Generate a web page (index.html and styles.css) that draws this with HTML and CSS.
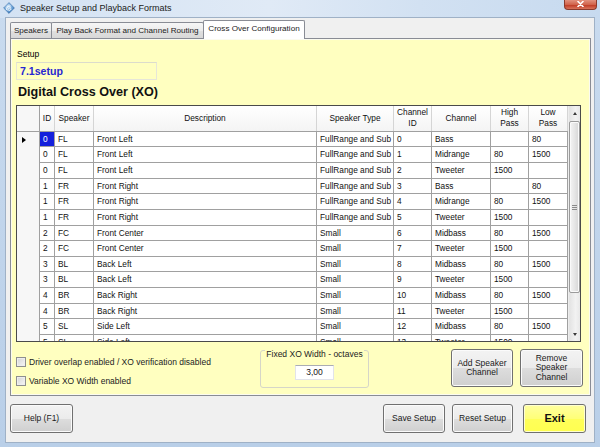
FILE: index.html
```html
<!DOCTYPE html>
<html>
<head>
<meta charset="utf-8">
<link rel="stylesheet" href="styles.css">
</head>
<body>
<div class="window">
  <div class="titlebar">
    <svg class="app-icon" viewBox="0 0 12 12" width="12" height="12">
      <defs>
        <radialGradient id="ig" cx="0.4" cy="0.35" r="0.7">
          <stop offset="0" stop-color="#cfe6fa"/>
          <stop offset="0.6" stop-color="#6aa3d8"/>
          <stop offset="1" stop-color="#2d64a8"/>
        </radialGradient>
      </defs>
      <path d="M6 0.6 L11.4 6 L6 11.4 L0.6 6 Z" fill="url(#ig)" stroke="#3a6ea8" stroke-width="0.6" stroke-linejoin="round"/>
      <path d="M3.6 7.6 C3.2 5.4 5 3.6 7.2 4 M5 8.4 C4.8 6.8 6 5.6 7.6 5.8 M6.6 8.6 C6.6 7.8 7.2 7.2 8 7.2" fill="none" stroke="#ffffff" stroke-width="0.9" stroke-linecap="round"/>
    </svg>
    <span class="title">Speaker Setup and Playback Formats</span>
    <div class="close">
      <svg viewBox="0 0 7 6" width="7" height="6"><path d="M1 0.5 L6 5.5 M6 0.5 L1 5.5" stroke="#ffffff" stroke-width="1.6" stroke-linecap="round"/></svg>
    </div>
  </div>
  <div class="client">
    <div class="tabs">
      <div class="tab tab-speakers">Speakers</div>
      <div class="tab tab-playback">Play Back Format and Channel Routing</div>
      <div class="tab tab-xo active">Cross Over Configuration</div>
    </div>
    <div class="tabpage">
      <div class="setup-label">Setup</div>
      <div class="setup-box">7.1setup</div>
      <div class="heading">Digital Cross Over (XO)</div>
      <div class="grid">
        <div class="gtable">
          <div class="cols ghead">
            <div class="hc corner"></div>
            <div class="hc">ID</div>
            <div class="hc">Speaker</div>
            <div class="hc">Description</div>
            <div class="hc">Speaker Type</div>
            <div class="hc">Channel<br>ID</div>
            <div class="hc">Channel</div>
            <div class="hc">High<br>Pass</div>
            <div class="hc">Low<br>Pass</div>
          </div>
          <div class="gbody">
            <div class="cols row"><div class="rh"><span class="cur"></span></div><div class="c sel">0</div><div class="c">FL</div><div class="c">Front Left</div><div class="c">FullRange and Sub</div><div class="c">0</div><div class="c">Bass</div><div class="c"></div><div class="c">80</div></div>
            <div class="cols row"><div class="rh"></div><div class="c">0</div><div class="c">FL</div><div class="c">Front Left</div><div class="c">FullRange and Sub</div><div class="c">1</div><div class="c">Midrange</div><div class="c">80</div><div class="c">1500</div></div>
            <div class="cols row"><div class="rh"></div><div class="c">0</div><div class="c">FL</div><div class="c">Front Left</div><div class="c">FullRange and Sub</div><div class="c">2</div><div class="c">Tweeter</div><div class="c">1500</div><div class="c"></div></div>
            <div class="cols row"><div class="rh"></div><div class="c">1</div><div class="c">FR</div><div class="c">Front Right</div><div class="c">FullRange and Sub</div><div class="c">3</div><div class="c">Bass</div><div class="c"></div><div class="c">80</div></div>
            <div class="cols row"><div class="rh"></div><div class="c">1</div><div class="c">FR</div><div class="c">Front Right</div><div class="c">FullRange and Sub</div><div class="c">4</div><div class="c">Midrange</div><div class="c">80</div><div class="c">1500</div></div>
            <div class="cols row"><div class="rh"></div><div class="c">1</div><div class="c">FR</div><div class="c">Front Right</div><div class="c">FullRange and Sub</div><div class="c">5</div><div class="c">Tweeter</div><div class="c">1500</div><div class="c"></div></div>
            <div class="cols row"><div class="rh"></div><div class="c">2</div><div class="c">FC</div><div class="c">Front Center</div><div class="c">Small</div><div class="c">6</div><div class="c">Midbass</div><div class="c">80</div><div class="c">1500</div></div>
            <div class="cols row"><div class="rh"></div><div class="c">2</div><div class="c">FC</div><div class="c">Front Center</div><div class="c">Small</div><div class="c">7</div><div class="c">Tweeter</div><div class="c">1500</div><div class="c"></div></div>
            <div class="cols row"><div class="rh"></div><div class="c">3</div><div class="c">BL</div><div class="c">Back Left</div><div class="c">Small</div><div class="c">8</div><div class="c">Midbass</div><div class="c">80</div><div class="c">1500</div></div>
            <div class="cols row"><div class="rh"></div><div class="c">3</div><div class="c">BL</div><div class="c">Back Left</div><div class="c">Small</div><div class="c">9</div><div class="c">Tweeter</div><div class="c">1500</div><div class="c"></div></div>
            <div class="cols row"><div class="rh"></div><div class="c">4</div><div class="c">BR</div><div class="c">Back Right</div><div class="c">Small</div><div class="c">10</div><div class="c">Midbass</div><div class="c">80</div><div class="c">1500</div></div>
            <div class="cols row"><div class="rh"></div><div class="c">4</div><div class="c">BR</div><div class="c">Back Right</div><div class="c">Small</div><div class="c">11</div><div class="c">Tweeter</div><div class="c">1500</div><div class="c"></div></div>
            <div class="cols row"><div class="rh"></div><div class="c">5</div><div class="c">SL</div><div class="c">Side Left</div><div class="c">Small</div><div class="c">12</div><div class="c">Midbass</div><div class="c">80</div><div class="c">1500</div></div>
            <div class="cols row"><div class="rh"></div><div class="c">5</div><div class="c">SL</div><div class="c">Side Left</div><div class="c">Small</div><div class="c">13</div><div class="c">Tweeter</div><div class="c">1500</div><div class="c"></div></div>
          </div>
        </div>
        <div class="vscroll">
          <div class="sarrow"><span class="tri-up"></span></div>
          <div class="thumb"><span class="grip"></span></div>
          <div class="strack"></div>
          <div class="sarrow"><span class="tri-down"></span></div>
        </div>
      </div>
      <div class="lower">
        <div class="checks">
          <div class="check-row"><span class="cb"></span><span>Driver overlap enabled / XO verification disabled</span></div>
          <div class="check-row"><span class="cb"></span><span>Variable XO Width enabled</span></div>
        </div>
        <div class="xo-group">
          <div class="xo-title">Fixed XO Width - octaves</div>
          <div class="xo-input">3,00</div>
        </div>
        <div class="btn btn-add">Add Speaker<br>Channel</div>
        <div class="btn btn-remove">Remove<br>Speaker<br>Channel</div>
      </div>
    </div>
    <div class="footer">
      <div class="btn btn-help">Help (F1)</div>
      <div class="btn btn-save">Save Setup</div>
      <div class="btn btn-reset">Reset Setup</div>
      <div class="btn btn-exit">Exit</div>
    </div>
  </div>
</div>
</body>
</html>
```
FILE: styles.css
```css
* { box-sizing: border-box; }
html, body { margin: 0; padding: 0; }
body {
  width: 600px;
  height: 447px;
  overflow: hidden;
  font-family: "Liberation Sans", Arial, sans-serif;
  font-size: 8.5px;
  color: #000;
}
.window {
  width: 600px;
  height: 447px;
  display: flex;
  flex-direction: column;
  background: linear-gradient(to bottom, #c9dbef, #b9cfe8);
}
.titlebar {
  height: 18px;
  flex: none;
  display: flex;
  align-items: flex-start;
  background: linear-gradient(to right, #d3e2f3 0%, #e0eaf6 45%, #d2e1f2 70%, #c7daef 100%);
}
.app-icon { margin: 2px 0 0 3px; flex: none; }
.title {
  margin-left: 5px;
  font-size: 9px;
  line-height: 16px;
  color: #1a1a1a;
}
.close {
  margin-left: auto;
  margin-right: 3px;
  width: 33px;
  height: 10px;
  border: 1px solid #8a3a2c;
  border-top: none;
  border-radius: 0 0 4px 4px;
  background: linear-gradient(to bottom, #e2917e 0%, #d1644c 50%, #c2402a 60%, #d8735b 100%);
  display: flex;
  align-items: center;
  justify-content: center;
  padding-bottom: 1px;
}
.client {
  flex: 1;
  margin: 0 6px 5px 6px;
  background: #f0f0f0;
  padding: 2px 3px 9px 4px;
  display: flex;
  flex-direction: column;
  box-shadow: 0 0 0 1px #9fb1c6;
}
.tabs {
  height: 18px;
  flex: none;
  display: flex;
  align-items: flex-end;
}
.tab {
  height: 16px;
  border: 1px solid #898c95;
  border-bottom: none;
  border-radius: 2px 2px 0 0;
  background: linear-gradient(to bottom, #f6f6f6 0%, #ececec 50%, #e0e0e0 51%, #d8d8d8 100%);
  display: flex;
  align-items: center;
  justify-content: center;
  font-size: 8.1px;
  white-space: nowrap;
  color: #1a1a1a;
}
.tab-speakers { width: 42px; }
.tab-playback { width: 153px; margin-left: -1px; }
.tab-xo { width: 102px; margin-left: -1px; }
.tab.active {
  height: 19px;
  margin-bottom: -1px;
  background: #ffffff;
  position: relative;
  z-index: 1;
  padding-bottom: 3px;
}
.tabpage {
  height: 358px;
  flex: none;
  border: 1px solid #898c95;
  background: #ffffc0;
  box-shadow: inset 0 0 0 1px #fbfbf0;
  display: flex;
  flex-direction: column;
}
.setup-label {
  margin: 10px 0 0 6px;
  line-height: 10px;
  height: 10px;
}
.setup-box {
  margin: 3px 0 0 5px;
  width: 141px;
  height: 18px;
  border: 1px solid #e6e6d8;
  border-top-color: #dcdccc;
  padding-left: 3px;
  font-weight: bold;
  font-size: 10.6px;
  line-height: 16px;
  color: #2626d2;
}
.heading {
  margin: 5px 0 0 7px;
  font-weight: bold;
  font-size: 12.6px;
  line-height: 15px;
  height: 15px;
  color: #111;
}
.grid {
  margin: 5px 0 0 5px;
  width: 565px;
  height: 237px;
  border: 1px solid #4a4a4a;
  display: flex;
  background: #fff;
  flex: none;
}
.gtable {
  width: 551px;
  display: flex;
  flex-direction: column;
  overflow: hidden;
}
.cols {
  display: grid;
  grid-template-columns: 23px 15px 39px 223px 77px 38px 59px 38px 39px;
}
.ghead {
  height: 25.7px;
  flex: none;
  background: linear-gradient(to bottom, #ffffff, #f4f4f4);
  border-bottom: 1px solid #a0a0a0;
}
.hc {
  border-right: 1px solid #d5d5d5;
  display: flex;
  align-items: center;
  justify-content: center;
  text-align: center;
  font-size: 8.3px;
  line-height: 11px;
  color: #111;
}
.hc.corner { border-right: 1px solid #a0a0a0; background: #f7f7f7; }
.gbody {
  flex: 1;
  overflow: hidden;
}
.row {
  height: 15.65px;
}
.rh {
  background: #f7f7f7;
  border-right: 1px solid #a0a0a0;
  display: flex;
  align-items: center;
  padding-left: 5px;
}
.cur {
  width: 0;
  height: 0;
  border-left: 4px solid #000;
  border-top: 3px solid transparent;
  border-bottom: 3px solid transparent;
}
.c {
  border-right: 1px solid #a0a0a0;
  border-bottom: 1px solid #a0a0a0;
  padding-left: 3px;
  font-size: 8.3px;
  line-height: 14.6px;
  white-space: nowrap;
  overflow: hidden;
  color: #111;
}
.c.sel {
  background: #1420dc;
  color: #fff;
}
.vscroll {
  width: 12px;
  display: flex;
  flex-direction: column;
  background: linear-gradient(to right, #e2e2e2, #f2f2f2 60%, #e8e8e8);
  border-left: 1px solid #ededed;
}
.sarrow {
  height: 14px;
  flex: none;
  display: flex;
  align-items: center;
  justify-content: center;
}
.tri-up {
  width: 0; height: 0;
  border-left: 2.5px solid transparent;
  border-right: 2.5px solid transparent;
  border-bottom: 3px solid #3a3a3a;
}
.tri-down {
  width: 0; height: 0;
  border-left: 2.5px solid transparent;
  border-right: 2.5px solid transparent;
  border-top: 3px solid #3a3a3a;
}
.thumb {
  height: 172px;
  margin: 1px 0 0 0;
  flex: none;
  border: 1px solid #9b9b9b;
  border-radius: 2px;
  background: linear-gradient(to right, #f4f4f4, #e6e6e6 50%, #d6d6d6);
  box-shadow: inset 0 0 0 1px #fafafa;
  display: flex;
  align-items: center;
  justify-content: center;
}
.grip {
  width: 5px;
  height: 5px;
  background: repeating-linear-gradient(to bottom, #8a8a8a 0, #8a8a8a 1px, transparent 1px, transparent 2px);
}
.strack { flex: 1; }
.lower {
  flex: 1;
  display: flex;
  align-items: flex-start;
}
.checks {
  margin-left: 5px;
  width: 244px;
  padding-top: 15px;
  display: flex;
  flex-direction: column;
  gap: 9px;
}
.check-row {
  height: 10px;
  display: flex;
  align-items: center;
  gap: 3px;
  line-height: 10px;
  white-space: nowrap;
  color: #222;
}
.cb {
  width: 10px;
  height: 10px;
  flex: none;
  border: 1px solid #8e8f8f;
  background: linear-gradient(135deg, #d4d4d4, #f7f7f7);
  box-shadow: inset 0 0 0 1px #eeeeee;
}
.xo-group {
  width: 109px;
  height: 38px;
  margin-top: 8px;
  border: 1px solid #d6d6c8;
  border-radius: 3px;
  display: flex;
  flex-direction: column;
  align-items: center;
}
.xo-title {
  margin-top: -2px;
  line-height: 10px;
  padding: 0 1px;
  background: #ffffc0;
  color: #222;
  white-space: nowrap;
}
.xo-input {
  margin-top: 6px;
  width: 39px;
  height: 15px;
  background: #fff;
  border: 1px solid #e2e3ea;
  border-top-color: #abadb3;
  text-align: center;
  line-height: 13px;
  color: #111;
}
.btn {
  border: 1px solid #707070;
  border-radius: 3px;
  background: linear-gradient(to bottom, #f3f3f3 0%, #ebebeb 50%, #dddddd 51%, #cfcfcf 100%);
  box-shadow: inset 0 0 0 1px #fbfbfb;
  display: flex;
  align-items: center;
  justify-content: center;
  text-align: center;
  font-size: 8.5px;
  line-height: 9.5px;
  color: #1a1a1a;
  flex: none;
}
.btn-add {
  width: 62px;
  height: 38px;
  margin: 7px 0 0 82px;
}
.btn-remove {
  width: 63px;
  height: 38px;
  margin: 7px 0 0 7px;
}
.footer {
  margin-top: 8px;
  height: 29px;
  flex: none;
  display: flex;
  padding-right: 5px;
}
.btn-help { width: 63px; height: 29px; }
.btn-save { width: 62px; height: 29px; margin-left: auto; }
.btn-reset { width: 61px; height: 29px; margin-left: 7px; }
.btn-exit {
  width: 63px;
  height: 29px;
  margin-left: 10px;
  background: linear-gradient(to bottom, #ffffa0 0%, #ffff78 50%, #ffff5a 51%, #ffff50 100%);
  box-shadow: inset 0 0 0 1px #ffffd0;
  font-weight: bold;
  font-size: 11px;
  color: #111;
}
```
